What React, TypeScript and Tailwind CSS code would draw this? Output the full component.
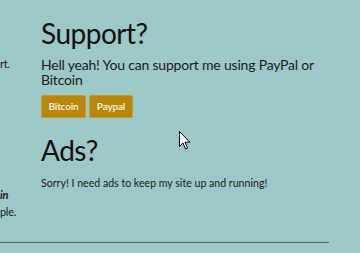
import React from "react";

export default function App() {
  return (
    <div
      className="relative w-[360px] h-[253px] overflow-hidden bg-[#9dc8c8] text-[#1c1c1c]"
      style={{ fontFamily: "Lato, 'Open Sans', sans-serif" }}
    >
      <div className="flex">
        <div className="w-[41px] shrink-0 text-[11px] leading-[17px] tracking-[-0.3px]">
          <div className="mt-[55px]">rt.</div>
          <div className="mt-[114px] font-bold italic">in</div>
          <div>ple.</div>
        </div>
        <div className="flex flex-col w-[310px]">
          <h1 className="mt-[16px] text-[28px] leading-[34px] tracking-[-0.5px] text-[#111]">Support?</h1>
          <p className="mt-[7px] text-[14px] leading-[15px] tracking-[-0.2px]">
            Hell yeah! You can support me using PayPal or Bitcoin
          </p>
          <div className="mt-[8px] flex gap-[3px]">
            <button className="h-[23px] w-[45px] rounded-[2px] border border-[#c89a2a] bg-[#b8860b] text-[10px] font-bold tracking-[-0.2px] text-[#f3ead5]">
              Bitcoin
            </button>
            <button className="h-[23px] w-[44px] rounded-[2px] border border-[#c89a2a] bg-[#b8860b] text-[10px] font-bold tracking-[-0.2px] text-[#f3ead5]">
              Paypal
            </button>
          </div>
          <h2 className="mt-[15px] text-[28px] leading-[34px] tracking-[-0.5px] text-[#111]">Ads?</h2>
          <p className="mt-[9px] text-[10.6px] leading-[14px]">
            Sorry! I need ads to keep my site up and running!
          </p>
        </div>
      </div>
      <div className="mt-[22px] w-[329px] border-t border-[#4e6262]" />
      <svg
        className="absolute left-[179px] top-[131px]"
        width="12"
        height="19"
        viewBox="0 0 12 19"
      >
        <path
          d="M0.5 0.5 L0.5 15.5 L4 12 L6.5 18 L8.5 17 L6 11.2 L10.8 11.2 Z"
          fill="#fff"
          stroke="#000"
          strokeWidth="1"
        />
      </svg>
    </div>
  );
}
